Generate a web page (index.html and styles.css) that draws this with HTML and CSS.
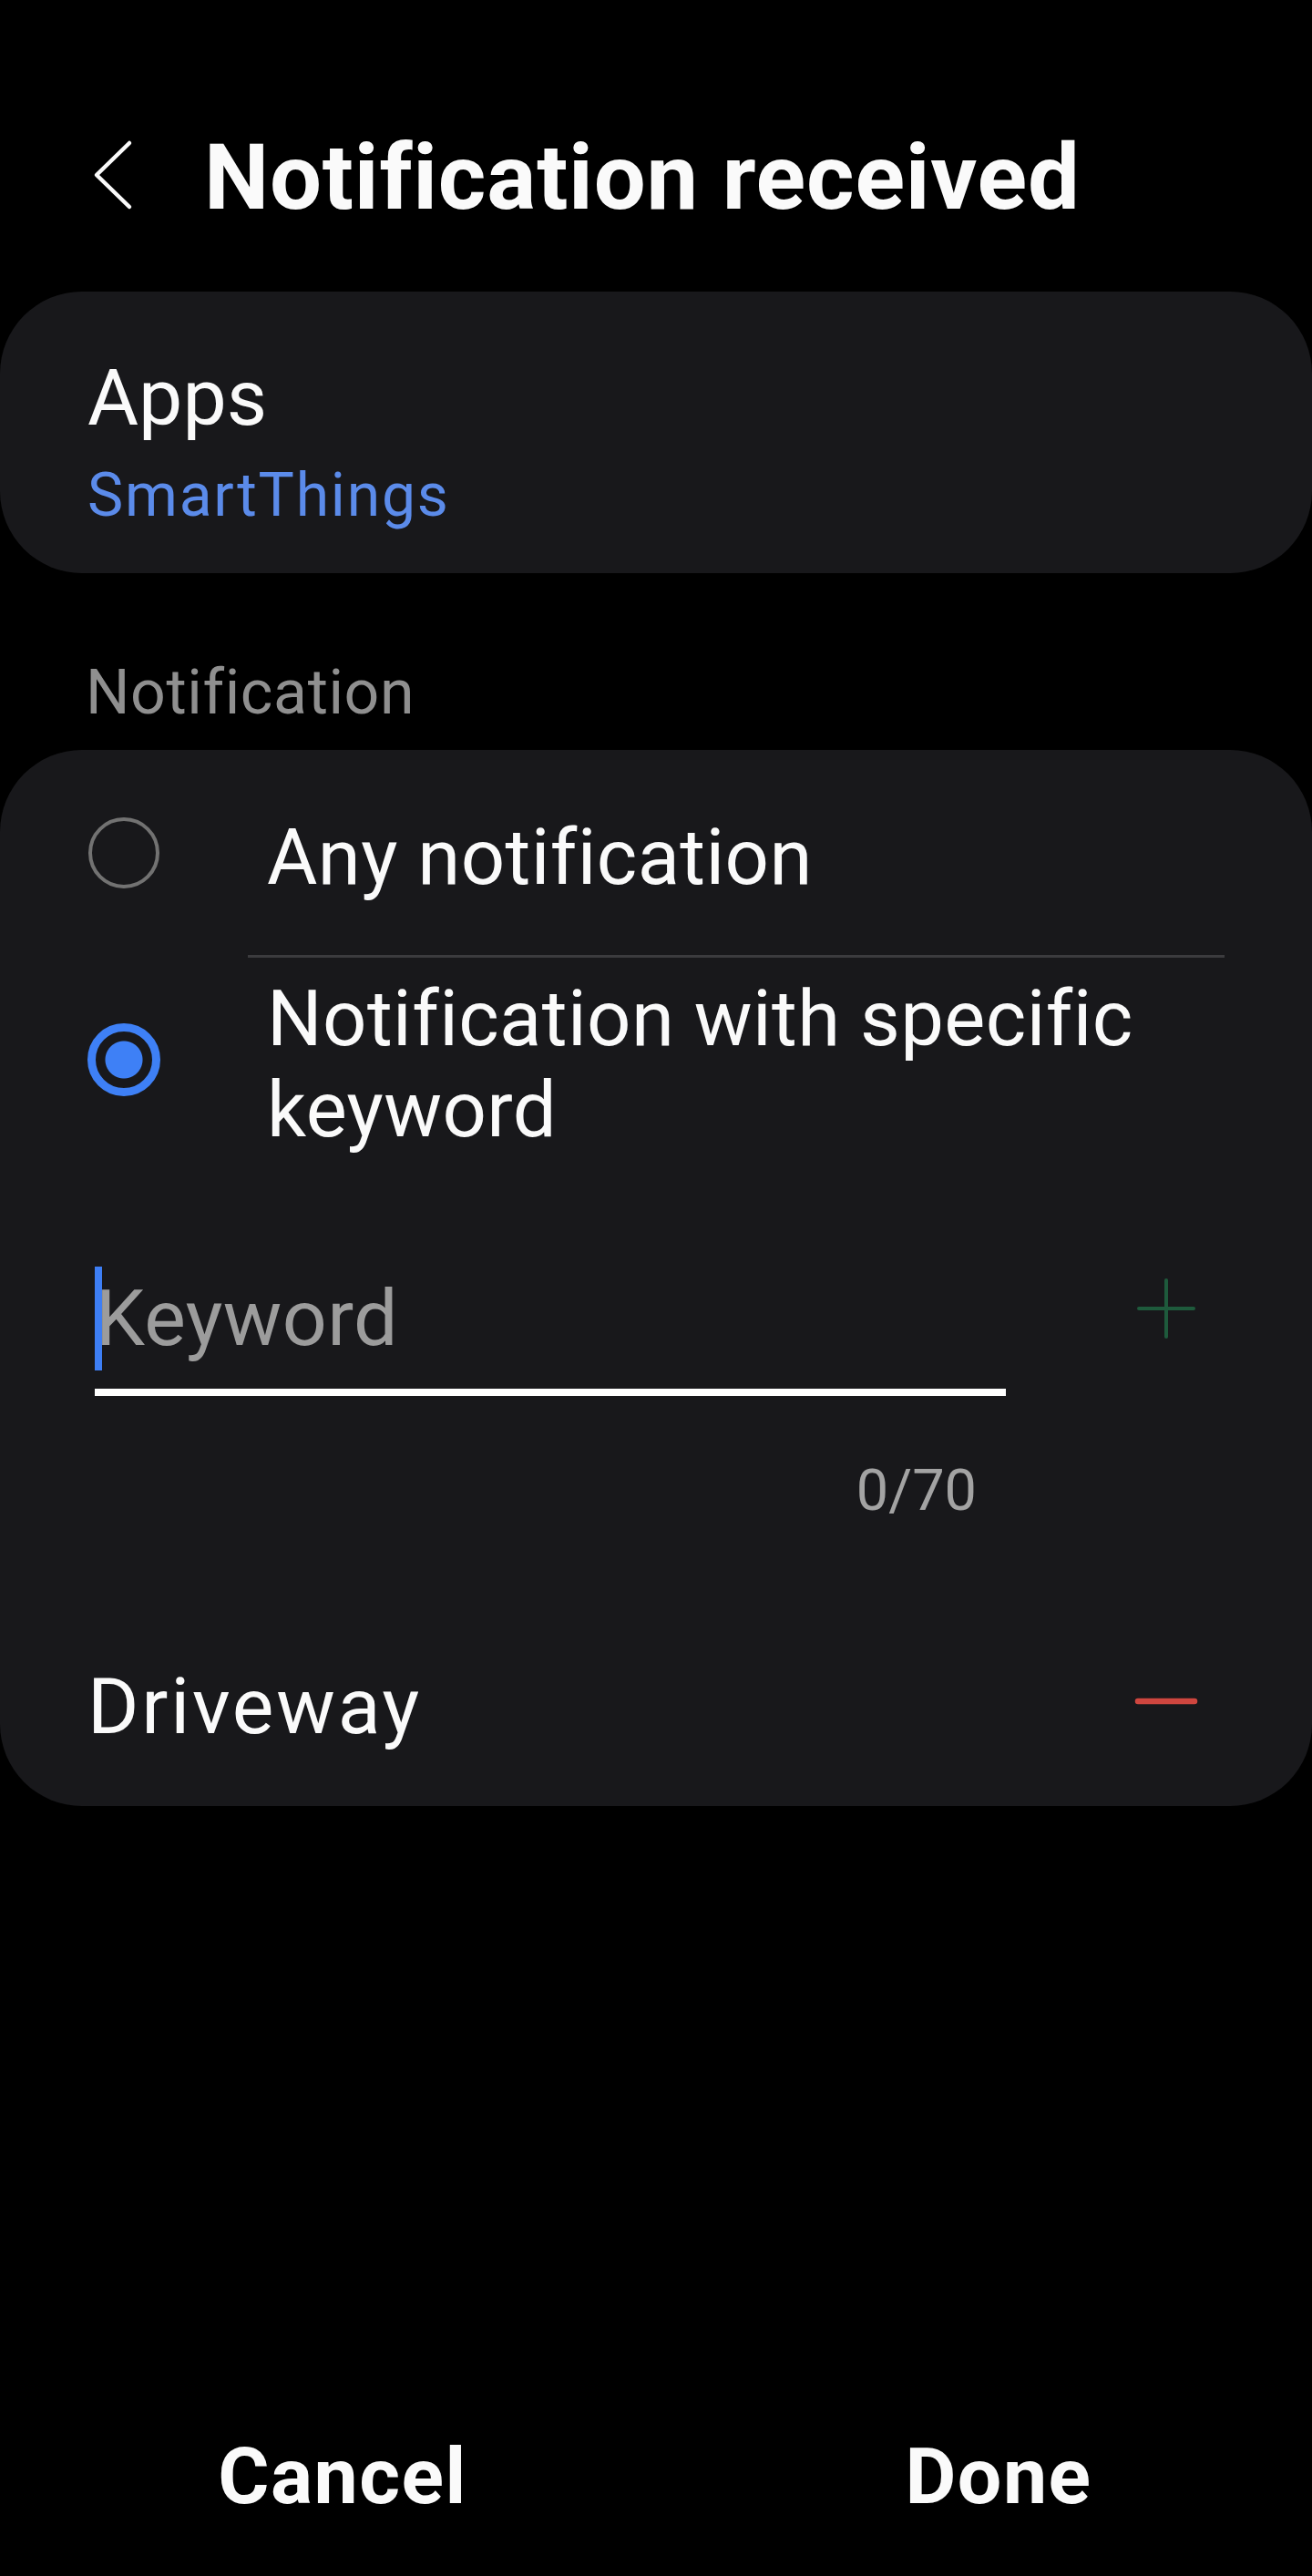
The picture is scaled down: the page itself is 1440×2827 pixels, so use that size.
FILE: index.html
```html
<!DOCTYPE html>
<html lang="en">

<head>
  <meta charset="UTF-8">
  <title>Notification received</title>
  <link rel="stylesheet" href="styles.css">
</head>

<body>
  <div class="page">
    <div class="header">
      <svg class="back" width="44" height="80" viewBox="0 0 44 80">
        <path d="M40 5 L4 40 L40 75" fill="none" stroke="#fafafa" stroke-width="4.5" stroke-linecap="round" stroke-linejoin="round" />
      </svg>
      <h1>Notification received</h1>
    </div>

    <div class="card apps">
      <div class="apps-title">Apps</div>
      <div class="apps-value">SmartThings</div>
    </div>

    <div class="section-label">Notification</div>

    <div class="card options">
      <div class="option first">
        <span class="radio"></span>
        <span class="option-text">Any notification</span>
      </div>
      <div class="divider"></div>
      <div class="option second">
        <span class="radio checked"></span>
        <span class="option-text">Notification with specific<br>keyword</span>
      </div>

      <div class="keyword-row">
        <div class="field">
          <span class="placeholder">Keyword</span>
        </div>
        <svg class="add" width="64" height="66" viewBox="0 0 64 66">
          <path d="M32 2 V64 M2 33 H62" stroke="#1e5a3c" stroke-width="4" stroke-linecap="round" />
        </svg>
      </div>
      <div class="counter">0/70</div>

      <div class="keyword-item">
        <span>Driveway</span>
        <svg class="remove" width="70" height="8" viewBox="0 0 70 8">
          <path d="M4 4 H66" stroke="#cf463f" stroke-width="6.5" stroke-linecap="round" />
        </svg>
      </div>
    </div>

    <div class="footer">
      <button>Cancel</button>
      <button>Done</button>
    </div>
  </div>
</body>

</html>
```

FILE: styles.css
```css
body {
  margin: 0;
  background-color: #000;
  color: #fafafa;
  font-family: Roboto, "Noto Sans", sans-serif;
}

.page {
  display: flex;
  flex-direction: column;
  width: 1440px;
  min-height: 2827px;
}

.header {
  display: flex;
  align-items: center;
  padding: 134px 0 0 102px;
}

.header .back {
  margin-right: 78px;
  margin-bottom: 5px;
}

.header h1 {
  margin: 0;
  font-size: 101px;
  font-weight: 700;
  line-height: 121px;
  letter-spacing: 0.8px;
}

.card {
  background-color: #18181b;
  border-radius: 90px;
}

.apps {
  margin-top: 65px;
  padding: 65px 96px 46px;
}

.apps-title {
  font-size: 86px;
  line-height: 103px;
}

.apps-value {
  margin-top: 16px;
  font-size: 66px;
  line-height: 79px;
  letter-spacing: 1.8px;
  color: #5b8bea;
}

.section-label {
  margin: 90px 0 22px;
  padding-left: 94px;
  font-size: 68px;
  line-height: 82px;
  letter-spacing: 0.6px;
  color: #8f8f8f;
}

.options {
  padding: 0 96px 58px;
}

.option {
  display: flex;
  align-items: center;
}

.option.first {
  padding: 67px 0 56px;
}

.option.second {
  padding-top: 17px;
}

.radio {
  flex: none;
  box-sizing: border-box;
  width: 78px;
  height: 78px;
  margin: 0 118px 10px 1px;
  border: 4.5px solid #727272;
  border-radius: 50%;
}

.radio.checked {
  width: 80px;
  height: 80px;
  margin-left: 0;
  margin-right: 117px;
  border: 9px solid #3e80f6;
  background: radial-gradient(circle, #3e80f6 0 20px, transparent 21px);
}

.option-text {
  font-size: 85px;
  line-height: 100px;
  letter-spacing: 0.4px;
}

.option.first .option-text {
  line-height: 102px;
}

.divider {
  height: 3px;
  margin-left: 176px;
  background-color: #3b3b3e;
}

.keyword-row {
  display: flex;
  align-items: flex-start;
  justify-content: space-between;
  margin-top: 122px;
}

.field {
  position: relative;
  width: 1000px;
  margin-left: 8px;
  padding-bottom: 20px;
  border-bottom: 8px solid #fff;
}

.field::before {
  content: "";
  position: absolute;
  left: 0;
  top: 0;
  width: 8px;
  height: 114px;
  background-color: #3d7ef5;
}

.placeholder {
  display: block;
  padding-left: 1px;
  font-size: 86px;
  line-height: 114px;
  letter-spacing: 0.4px;
  color: #9c9c9c;
}

.add {
  margin: 13px 32px 0 0;
}

.counter {
  width: 1000px;
  margin: 67px 0 0 8px;
  box-sizing: border-box;
  padding-right: 32px;
  text-align: right;
  font-size: 63px;
  line-height: 74px;
  color: #a3a3a3;
}

.keyword-item {
  display: flex;
  align-items: center;
  justify-content: space-between;
  margin-top: 148px;
  font-size: 86px;
  line-height: 103px;
  letter-spacing: 2.8px;
}

.remove {
  margin: 0 29px 12px 0;
}

.footer {
  display: flex;
  margin-top: auto;
  padding-bottom: 58px;
}

.footer button {
  flex: 1;
  padding: 0 0 0 32px;
  border: none;
  background: none;
  color: #fafafa;
  font-family: Roboto, "Noto Sans", sans-serif;
  font-size: 86px;
  font-weight: 700;
  line-height: 103px;
  letter-spacing: 1.5px;
}
```
